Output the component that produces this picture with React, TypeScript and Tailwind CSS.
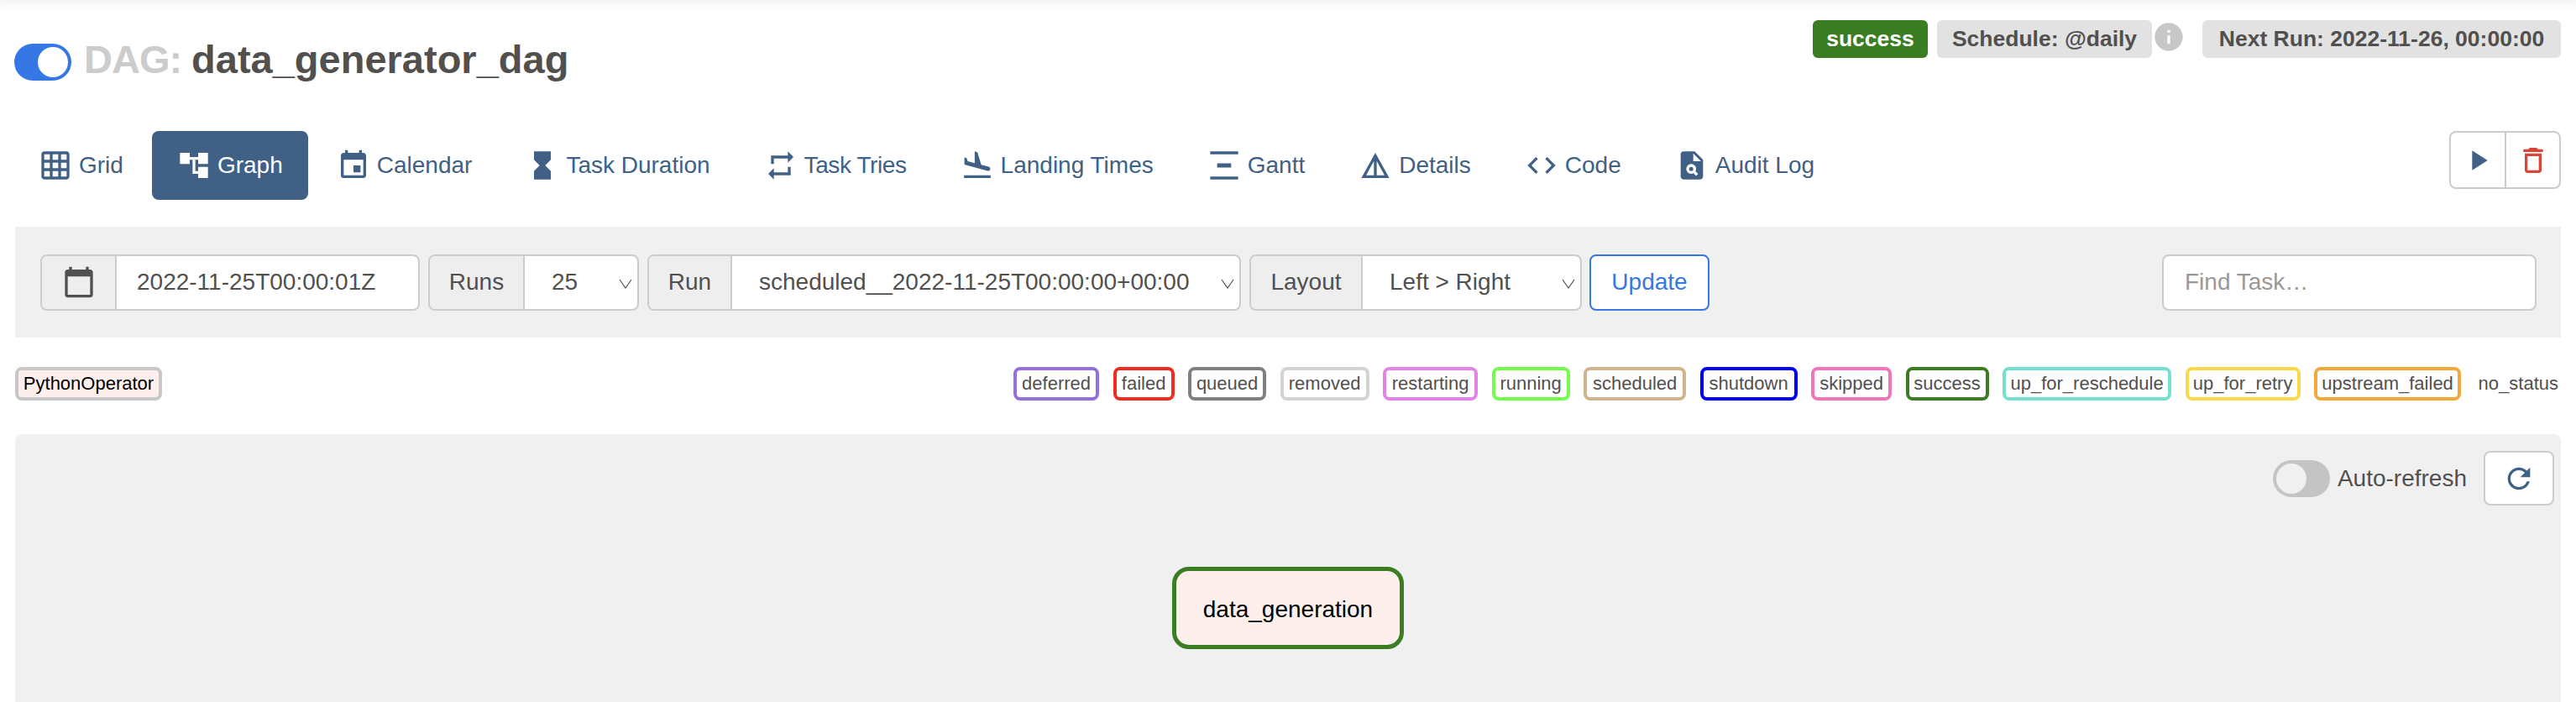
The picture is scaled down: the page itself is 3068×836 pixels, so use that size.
import React from "react";
import {
  MdGridOn, MdAccountTree, MdEvent, MdHourglassFull, MdRepeat, MdFlightLand,
  MdVerticalDistribute, MdDetails, MdCode, MdPlagiarism, MdPlayArrow,
  MdDeleteOutline, MdRefresh, MdInfo, MdCalendarToday,
} from "react-icons/md";

const tabs = [
  { label: "Grid", Icon: MdGridOn, text: "" },
  { label: "Graph", Icon: MdAccountTree, active: true, text: "" },
  { label: "Calendar", Icon: MdEvent, text: "" },
  { label: "Task Duration", Icon: MdHourglassFull, text: "" },
  { label: "Task Tries", Icon: MdRepeat, text: "tracking-[-0.4px]" },
  { label: "Landing Times", Icon: MdFlightLand, text: "" },
  { label: "Gantt", Icon: MdVerticalDistribute, text: "" },
  { label: "Details", Icon: MdDetails, text: "" },
  { label: "Code", Icon: MdCode, text: "" },
  { label: "Audit Log", Icon: MdPlagiarism, text: "" },
];

const states = [
  { label: "deferred", cls: "border-[#9370db] w-[102px]" },
  { label: "failed", cls: "border-[#ee2c1f] w-[73px]" },
  { label: "queued", cls: "border-[#808080] w-[93px]" },
  { label: "removed", cls: "border-[#d3d3d3] w-[106px]" },
  { label: "restarting", cls: "border-[#e383e8] w-[113px]" },
  { label: "running", cls: "border-[#73fe4c] w-[93px]" },
  { label: "scheduled", cls: "border-[#d2b48c] w-[122px]" },
  { label: "shutdown", cls: "border-[#0000ff] w-[116px]" },
  { label: "skipped", cls: "border-[#f274b9] w-[96px]" },
  { label: "success", cls: "border-[#3a7d23] w-[99px]" },
  { label: "up_for_reschedule", cls: "border-[#76e0d0] w-[201px]" },
  { label: "up_for_retry", cls: "border-[#fbd849] w-[137px]" },
  { label: "upstream_failed", cls: "border-[#f3a83c] w-[175px]" },
];

function Chevron() {
  return (
    <svg width="16" height="16" viewBox="0 0 16 16" fill="none" stroke="#51504f" strokeWidth="1.2" className="shrink-0 mt-[4px]">
      <path d="M1 3 L8 13 L15 3" />
    </svg>
  );
}

function Addon({ children, w }: { children: React.ReactNode; w: string }) {
  return (
    <div className={`${w} shrink-0 h-full flex items-center justify-center bg-[#eeeeee] border-r-2 border-[#cccccc]`}>
      {children}
    </div>
  );
}

function Select({ label, value, outer, addon, pad }: { label: string; value: string; outer: string; addon: string; pad: string }) {
  return (
    <div className={`${outer} h-[67px] flex rounded-lg border-2 border-[#cccccc] bg-white overflow-hidden`}>
      <Addon w={addon}>{label}</Addon>
      <div className={`flex-1 h-full flex items-center justify-between pr-[6px] ${pad}`}>
        <span>{value}</span>
        <Chevron />
      </div>
    </div>
  );
}

export default function App() {
  return (
    <div className="w-[3068px] h-[836px] overflow-hidden flex flex-col bg-white text-[#51504f] text-[28px] leading-none shadow-[inset_0_14px_14px_-12px_rgba(0,0,0,0.07)] font-['Liberation_Sans',Arial,sans-serif]">
      {/* Header */}
      <div className="h-[156px] shrink-0 flex justify-between pl-[17px] pr-[18px]">
        <div className="flex items-start pt-[52px]">
          <div className="w-[68px] h-[44px] rounded-full bg-[#3578e5] flex items-center justify-end pr-[4px]">
            <div className="w-[36px] h-[36px] rounded-full bg-white" />
          </div>
          <h1 className="ml-[15px] -mt-[9px] flex gap-[12px] text-[47px] leading-[56px] font-bold">
            <span className="text-[#cccccc] tracking-[-1px]">DAG:</span>
            <span>data_generator_dag</span>
          </h1>
        </div>
        <div className="flex items-start pt-[24px] text-[26.5px] font-bold">
          <span className="h-[45px] w-[137px] flex items-center justify-center rounded-md bg-[#3a7d23] text-white">success</span>
          <span className="ml-[11px] h-[45px] w-[256px] flex items-center justify-center rounded-md bg-[#e2e2e2]">Schedule: @daily</span>
          <MdInfo className="text-[#c7c7c7]" size={40} />
          <span className="ml-[20px] h-[45px] w-[427px] flex items-center justify-center rounded-md bg-[#e2e2e2]">Next Run: 2022-11-26, 00:00:00</span>
        </div>
      </div>

      {/* Tabs */}
      <div className="h-[82px] shrink-0 flex justify-between pl-[16px] pr-[18px]">
        <nav className="flex gap-[4px]">
          {tabs.map(({ label, Icon, active, text }) => (
            <div
              key={label}
              className={`h-[82px] flex items-center gap-[8px] px-[30px] rounded-lg ${active ? "bg-[#406185] text-white" : "text-[#406185]"}`}
            >
              <Icon size={40} />
              <span className={text}>{label}</span>
            </div>
          ))}
        </nav>
        <div className="h-[69px] w-[133px] flex rounded-lg border-2 border-[#cccccc] overflow-hidden">
          <div className="w-[66px] flex items-center justify-center border-r-2 border-[#cccccc] text-[#406185]">
            <MdPlayArrow size={40} />
          </div>
          <div className="flex-1 flex items-center justify-center text-[#d9453a]">
            <MdDeleteOutline size={40} />
          </div>
        </div>
      </div>

      {/* Controls */}
      <div className="mt-[32px] mx-[18px] h-[132px] shrink-0 flex items-center justify-between pl-[30px] pr-[29px] bg-[#f0f0f0]">
        <div className="flex items-center gap-[10px]">
          <div className="w-[452px] h-[67px] flex rounded-lg border-2 border-[#cccccc] bg-white overflow-hidden">
            <Addon w="w-[89px]"><MdCalendarToday size={40} /></Addon>
            <div className="flex-1 flex items-center pl-[24px]">2022-11-25T00:00:01Z</div>
          </div>
          <Select label="Runs" value="25" outer="w-[251px]" addon="w-[113px]" pad="pl-[32px]" />
          <Select label="Run" value="scheduled__2022-11-25T00:00:00+00:00" outer="w-[707px]" addon="w-[99px]" pad="pl-[32px]" />
          <Select label="Layout" value="Left > Right" outer="w-[396px]" addon="w-[133px]" pad="pl-[32px]" />
          <div className="-ml-[1px] w-[143px] h-[67px] flex items-center justify-center rounded-lg border-2 border-[#3578e5] bg-white text-[#3578e5]">Update</div>
        </div>
        <div className="w-[446px] h-[67px] flex items-center pl-[25px] rounded-lg border-2 border-[#cccccc] bg-white text-[#999999]">Find Task…</div>
      </div>

      {/* Legend */}
      <div className="mt-[35px] mx-[18px] h-[40px] shrink-0 flex items-center justify-between pr-[3px] text-[22px]">
        <span className="h-[40px] w-[175px] flex items-center justify-center rounded-lg border-4 border-[#c8c8c8] bg-[#fdf0ec] text-black">PythonOperator</span>
        <div className="flex items-center gap-[16.5px]">
          {states.map((s) => (
            <span key={s.label} className={`h-[40px] flex items-center justify-center rounded-lg border-4 bg-white ${s.cls}`}>{s.label}</span>
          ))}
          <span className="ml-[4px]">no_status</span>
        </div>
      </div>

      {/* Graph */}
      <div className="mt-[40px] mx-[18px] flex-1 rounded-t-lg bg-[#f0f0f0]">
        <div className="pt-[20px] pr-[8px] flex justify-end items-center">
          <div className="w-[68px] h-[44px] rounded-full bg-[#c4c4c4] flex items-center pl-[4px]">
            <div className="w-[36px] h-[36px] rounded-full bg-[#f0f0f0]" />
          </div>
          <span className="ml-[9px] mr-[20px]">Auto-refresh</span>
          <div className="w-[84px] h-[65px] flex items-center justify-center rounded-lg border-2 border-[#cccccc] bg-white text-[#406185]">
            <MdRefresh size={40} />
          </div>
        </div>
        <div className="mt-[73px] flex justify-center">
          <div className="w-[276px] h-[98px] pt-[3px] flex items-center justify-center rounded-[20px] border-[5px] border-[#3a7d23] bg-[#fdf0ec] text-black">data_generation</div>
        </div>
      </div>
    </div>
  );
}
